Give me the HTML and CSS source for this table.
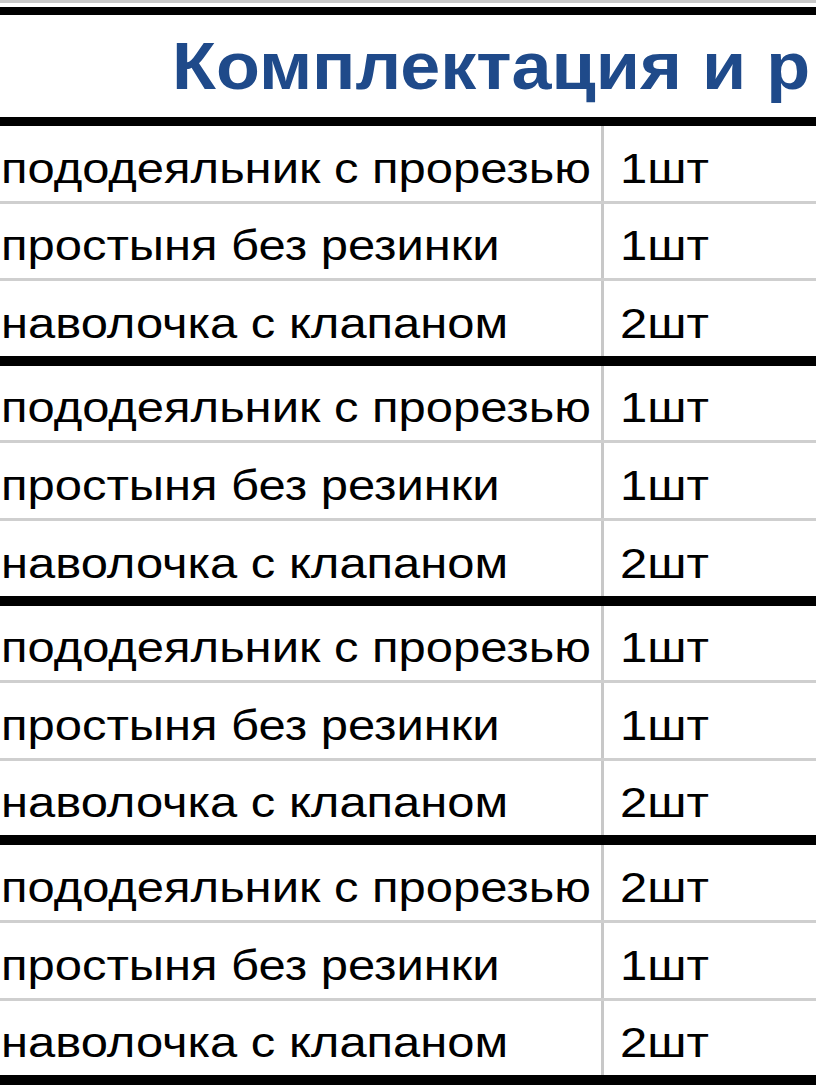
FILE: index.html
```html
<!DOCTYPE html>
<html lang="ru">
<head>
<meta charset="utf-8">
<title>Комплектация</title>
<link rel="stylesheet" href="styles.css">
</head>
<body>
<div class="sheet">
  <div class="topline"></div>
  <div class="title"><span class="txt">Комплектация и р</span></div>
  <div class="group">
    <div class="row"><div class="name"><span class="txt">пододеяльник с прорезью</span></div><div class="qty"><span class="txt">1шт</span></div></div>
    <div class="row"><div class="name"><span class="txt">простыня без резинки</span></div><div class="qty"><span class="txt">1шт</span></div></div>
    <div class="row"><div class="name"><span class="txt">наволочка с клапаном</span></div><div class="qty"><span class="txt">2шт</span></div></div>
  </div>
  <div class="group">
    <div class="row"><div class="name"><span class="txt">пододеяльник с прорезью</span></div><div class="qty"><span class="txt">1шт</span></div></div>
    <div class="row"><div class="name"><span class="txt">простыня без резинки</span></div><div class="qty"><span class="txt">1шт</span></div></div>
    <div class="row"><div class="name"><span class="txt">наволочка с клапаном</span></div><div class="qty"><span class="txt">2шт</span></div></div>
  </div>
  <div class="group">
    <div class="row"><div class="name"><span class="txt">пододеяльник с прорезью</span></div><div class="qty"><span class="txt">1шт</span></div></div>
    <div class="row"><div class="name"><span class="txt">простыня без резинки</span></div><div class="qty"><span class="txt">1шт</span></div></div>
    <div class="row"><div class="name"><span class="txt">наволочка с клапаном</span></div><div class="qty"><span class="txt">2шт</span></div></div>
  </div>
  <div class="group">
    <div class="row"><div class="name"><span class="txt">пододеяльник с прорезью</span></div><div class="qty"><span class="txt">2шт</span></div></div>
    <div class="row"><div class="name"><span class="txt">простыня без резинки</span></div><div class="qty"><span class="txt">1шт</span></div></div>
    <div class="row"><div class="name"><span class="txt">наволочка с клапаном</span></div><div class="qty"><span class="txt">2шт</span></div></div>
  </div>
</div>
</body>
</html>
```
FILE: styles.css
```css
html, body {
  margin: 0;
  padding: 0;
  background: #ffffff;
  overflow: hidden;
}
body {
  width: 816px;
  height: 1089px;
  font-family: "Liberation Sans", Arial, sans-serif;
  color: #000000;
}
.sheet {
  margin-left: -20px;
  width: 900px;
}
.topline {
  height: 3px;
  background: #c8c8c8;
  margin-bottom: 4px;
}
.txt {
  display: inline-block;
  white-space: nowrap;
  transform-origin: left bottom;
}
.title {
  border-top: 8px solid #000000;
  border-bottom: 9px solid #000000;
  height: 102px;
  box-sizing: border-box;
  height: 119px;
  padding-left: 192px;
  padding-bottom: 18px;
  font-weight: bold;
  font-size: 66px;
  line-height: 1;
  color: #1f4a8a;
  display: flex;
  align-items: flex-end;
}
.title .txt {
  transform: scaleX(1.09);
}
.group {
  border-bottom: 10px solid #000000;
}
.row {
  display: grid;
  grid-template-columns: 624px 1fr;
  height: 74.6px;
}
.row + .row {
  border-top: 3px solid #cfcfcf;
}
.name, .qty {
  font-size: 42px;
  line-height: 1;
  display: flex;
  align-items: flex-end;
  padding-bottom: 11px;
  box-sizing: border-box;
}
.name .txt, .qty .txt {
  transform: scaleX(1.165);
}
.name {
  padding-left: 21px;
  border-right: 3px solid #c8c8c8;
}
.qty {
  padding-left: 16px;
}
```
